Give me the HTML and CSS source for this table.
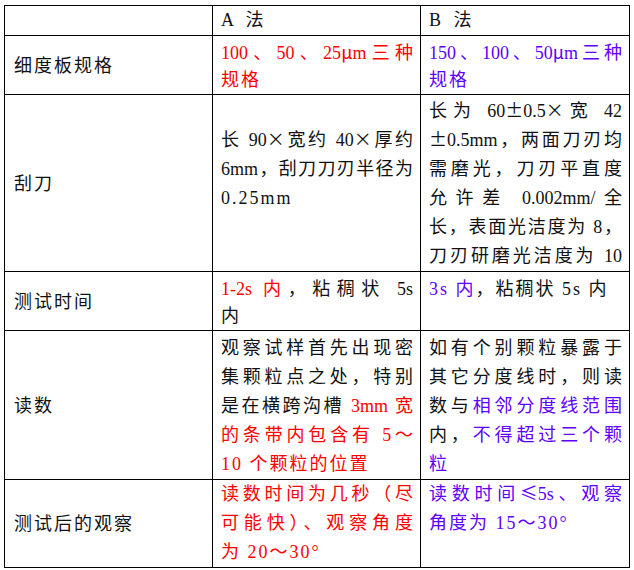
FILE: index.html
```html
<!DOCTYPE html>
<html lang="zh-CN">
<head>
<meta charset="utf-8">
<title>A法与B法对比</title>
<link rel="stylesheet" href="styles.css">
</head>
<body>
<table class="cmp">
  <colgroup><col class="c1"><col class="c2"><col class="c3"></colgroup>
  <tr class="r-head">
    <td class="label"></td>
    <td class="head">A 法</td>
    <td class="head">B 法</td>
  </tr>
  <tr class="r-spec">
    <td class="label">细度板规格</td>
    <td class="red tight"><div class="j">100、50、25<span class="w">μ</span>m三种</div><div>规格</div></td>
    <td class="blue tight"><div class="j">150、100、50<span class="w">μ</span>m三种</div><div>规格</div></td>
  </tr>
  <tr class="r-blade">
    <td class="label">刮刀</td>
    <td class="offset"><div class="j">长 90<span class="w">×</span>宽约 40<span class="w">×</span>厚约</div><div class="j">6mm，刮刀刀刃半径为</div><div>0.25mm</div></td>
    <td class="pad2"><div class="j">长为 60<span class="w">±</span>0.5<span class="w">×</span>宽 42</div><div class="j"><span class="w">±</span>0.5mm，两面刀刃均</div><div class="j">需磨光，刀刃平直度</div><div class="j">允许差 0.002mm/全</div><div class="j">长，表面光洁度为 8，</div><div class="j">刀刃研磨光洁度为 10</div></td>
  </tr>
  <tr class="r-time">
    <td class="label">测试时间</td>
    <td class="tight"><div class="j"><span class="red">1-2s 内</span>，粘稠状 5s</div><div>内</div></td>
    <td class="tight"><div><span class="blue">3s 内</span>，粘稠状 5s 内</div></td>
  </tr>
  <tr class="r-read">
    <td class="label">读数</td>
    <td><div class="j">观察试样首先出现密</div><div class="j">集颗粒点之处，特别</div><div class="j">是在横跨沟槽 <span class="red">3mm 宽</span></div><div class="j red">的条带内包含有 5～</div><div class="red">10 个颗粒的位置</div></td>
    <td><div class="j">如有个别颗粒暴露于</div><div class="j">其它分度线时，则读</div><div class="j">数与<span class="blue">相邻分度线范围</span></div><div class="j">内，<span class="blue">不得超过三个颗</span></div><div class="blue">粒</div></td>
  </tr>
  <tr class="r-after">
    <td class="label">测试后的观察</td>
    <td class="red flush"><div class="j">读数时间为几秒（尽</div><div class="j">可能快）、观察角度</div><div>为 20～30°</div></td>
    <td class="blue flush"><div class="j">读数时间<span class="w">≤</span>5s、观察</div><div>角度为 15～30°</div></td>
  </tr>
</table>
</body>
</html>
```
FILE: styles.css
```css
body {
  margin: 0;
  background: #fff;
  font-family: "Liberation Serif", "Noto Sans CJK SC", serif;
  font-size: 18px;
  color: #111;
}

.cmp {
  border-collapse: collapse;
  table-layout: fixed;
  width: 625px;
  margin: 5px 0 0 4px;
}

.c1, .c2 { width: 208px; }
.c3 { width: 209px; }

.cmp td {
  border: 1px solid #000;
  padding: 3px 7px 0 8px;
  vertical-align: top;
  line-height: 29px;
  letter-spacing: 2px;
}

.cmp td.label {
  vertical-align: middle;
  padding: 2px 0 0 9px;
}

.cmp td.head {
  vertical-align: middle;
  padding-top: 0;
  letter-spacing: 4px;
}

.cmp td.tight {
  padding-top: 4px;
  line-height: 27px;
}

.cmp td.offset { padding-top: 31px; }
.cmp td.pad2 { padding-top: 2px; }
.cmp td.flush { padding-top: 0; }

.r-head { height: 30px; }
.r-spec { height: 59px; }
.r-blade { height: 177px; }
.r-time { height: 59px; }
.r-read { height: 149px; }
.r-after { height: 87px; }

.j {
  letter-spacing: 0;
  text-align: justify;
  text-align-last: justify;
}

.w {
  font-family: "Noto Sans CJK SC", sans-serif;
  line-height: 1;
}

.red { color: #ff0000; }
.blue { color: #6000ff; }
```
